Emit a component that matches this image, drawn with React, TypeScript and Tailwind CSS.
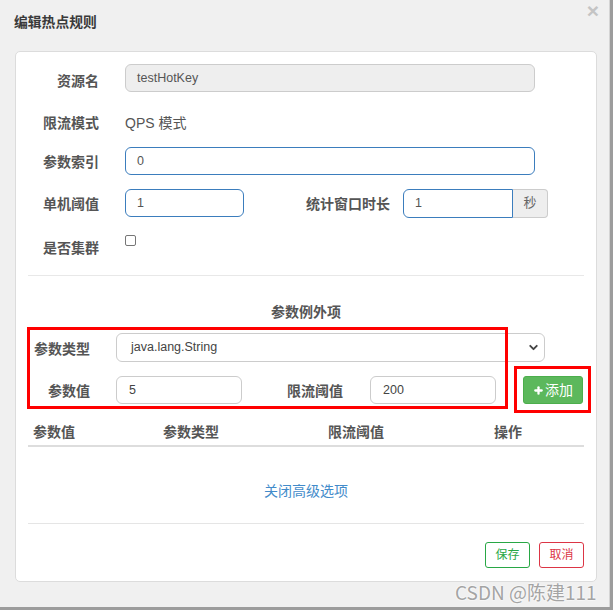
import React from "react";
import { ChevronDown, Plus } from "lucide-react";

const font = "font-['Liberation_Sans','Noto_Sans_CJK_SC',sans-serif]";

function Label({ text, className = "" }: { text: string; className?: string }) {
  return (
    <div className={`text-[14px] font-bold text-[#555] text-right shrink-0 ${className}`}>{text}</div>
  );
}

export default function App() {
  const columns = [
    { label: "参数值", w: "w-[130px]" },
    { label: "参数类型", w: "w-[165px]" },
    { label: "限流阈值", w: "w-[166px]" },
    { label: "操作", w: "w-[95px]" },
  ];

  return (
    <div className={`w-[613px] h-[610px] bg-[#9c9c9c] ${font}`}>
      <div className="relative w-[610px] h-[607px] bg-[#f0f0f0] border-r border-[#d4d4d4] flex flex-col">
        {/* header */}
        <div className="h-[51px] flex items-start justify-between pl-[14px] pr-[10px]">
          <h4 className="mt-[13px] text-[13.8px] leading-[20px] font-bold text-[#3a3a3a]">编辑热点规则</h4>
          <span className="mt-[-1px] text-[21px] leading-[24px] font-bold text-[#c4c4c4]">×</span>
        </div>

        {/* body card */}
        <div className="ml-[15px] w-[582px] h-[531px] bg-white border border-[#dcdcdc] rounded-[5px] px-[12px] flex flex-col">
          <div className="pl-[1px] flex flex-col">
            {/* 资源名 */}
            <div className="mt-[12px] h-[28px] flex items-center">
              <Label text="资源名" className="w-[70px] mt-[7px]" />
              <div className="ml-[26px] w-[410px] h-[28px] bg-[#eeeeee] border border-[#cccccc] rounded-[6px] flex items-center pl-[11px] text-[12.5px] text-[#555]">
                testHotKey
              </div>
            </div>
            {/* 限流模式 */}
            <div className="mt-[17px] h-[28px] flex items-center">
              <Label text="限流模式" className="w-[70px]" />
              <div className="ml-[26px] text-[14px] text-[#555]">QPS 模式</div>
            </div>
            {/* 参数索引 */}
            <div className="mt-[10px] h-[28px] flex items-center">
              <Label text="参数索引" className="w-[70px] mt-[3px]" />
              <div className="ml-[26px] w-[410px] h-[28px] border border-[#3b7dbd] rounded-[6px] flex items-center pl-[11px] text-[12.5px] text-[#555]">
                0
              </div>
            </div>
            {/* 单机阈值 / 统计窗口时长 */}
            <div className="mt-[14px] h-[28px] flex items-center">
              <Label text="单机阈值" className="w-[70px] mt-[2px]" />
              <div className="ml-[26px] w-[119px] h-[28px] border border-[#3b7dbd] rounded-[6px] flex items-center pl-[11px] text-[12.5px] text-[#555]">
                1
              </div>
              <Label text="统计窗口时长" className="w-[146px] mt-[2px]" />
              <div className="ml-[13px] flex h-[29px]">
                <div className="w-[110px] border border-[#3b7dbd] rounded-l-[6px] flex items-center pl-[11px] text-[12.5px] text-[#555]">
                  1
                </div>
                <div className="w-[35px] bg-[#eeeeee] border border-l-0 border-[#cccccc] rounded-r-[4px] flex items-center justify-center text-[13px] text-[#666]">
                  秒
                </div>
              </div>
            </div>
            {/* 是否集群 */}
            <div className="mt-[16px] h-[28px] flex items-start">
              <Label text="是否集群" className="w-[70px] mt-[5px]" />
              <div className="ml-[26px] mt-[2px] w-[11px] h-[11px] border border-[#767676] rounded-[2px] bg-white" />
            </div>
          </div>

          <div className="mt-[14px] h-px bg-[#e8e8e8]" />

          <div className="mt-[26px] h-[20px] flex items-center justify-center text-[14px] font-bold text-[#555]">
            参数例外项
          </div>

          {/* exception item rows */}
          <div className="relative mt-[11px] flex flex-col">
            <div className="h-[29px] flex items-center">
              <Label text="参数类型" className="w-[62px] mt-[3px]" />
              <div className="ml-[26px] w-[429px] h-[29px] border border-[#cccccc] rounded-[6px] flex items-center justify-between pl-[14px] pr-[4px] text-[12.5px] text-[#444]">
                <span>java.lang.String</span>
                <ChevronDown size={13} strokeWidth={3.5} className="text-[#444]" />
              </div>
            </div>
            <div className="mt-[14px] h-[28px] flex items-center">
              <Label text="参数值" className="w-[62px] mt-[3px]" />
              <div className="ml-[26px] w-[126px] h-[28px] border border-[#cccccc] rounded-[6px] flex items-center pl-[12px] text-[12.5px] text-[#444]">
                5
              </div>
              <Label text="限流阈值" className="w-[101px] mt-[3px]" />
              <div className="ml-[27px] w-[126px] h-[28px] border border-[#cccccc] rounded-[6px] flex items-center pl-[12px] text-[12.5px] text-[#444]">
                200
              </div>
              <button className="ml-[27px] w-[60px] h-[28px] bg-[#5cb85c] border border-[#4cae4c] rounded-[3px] flex items-center justify-center gap-[1px] text-white text-[14px]">
                <Plus size={11} strokeWidth={5} />
                <span>添加</span>
              </button>
            </div>
            {/* annotation boxes */}
            <div className="absolute left-[-1px] top-[-6px] w-[481px] h-[82px] border-[3px] border-[#ff0000]" />
            <div className="absolute left-[486px] top-[33px] w-[77px] h-[47px] border-[3px] border-[#ff0000]" />
          </div>

          {/* table header */}
          <div className="mt-[15px] h-[28px] flex items-center border-b-2 border-[#dddddd]">
            {columns.map((c) => (
              <div key={c.label} className={`${c.w} pl-[5px] text-[14px] font-bold text-[#555]`}>
                {c.label}
              </div>
            ))}
          </div>

          <div className="mt-[34px] h-[20px] flex items-center justify-center text-[14px] text-[#428bca]">
            关闭高级选项
          </div>

          <div className="mt-[22px] h-px bg-[#e5e5e5]" />

          <div className="mt-[18px] flex justify-end gap-[9px]">
            <button className="w-[45px] h-[26px] border border-[#28a745] rounded-[3px] text-[12px] text-[#28a745] flex items-center justify-center">
              保存
            </button>
            <button className="w-[45px] h-[26px] border border-[#dc3545] rounded-[3px] text-[12px] text-[#dc3545] flex items-center justify-center">
              取消
            </button>
          </div>
        </div>

        {/* watermark */}
        <div className="absolute left-[455px] top-[579px] text-[19px] leading-[26px] font-['Noto_Sans_CJK_SC',sans-serif] text-[#a4a4a4] [text-shadow:0_0_2px_#ffffff,0_0_2px_#ffffff]">
          CSDN @陈建111
        </div>
      </div>
    </div>
  );
}
